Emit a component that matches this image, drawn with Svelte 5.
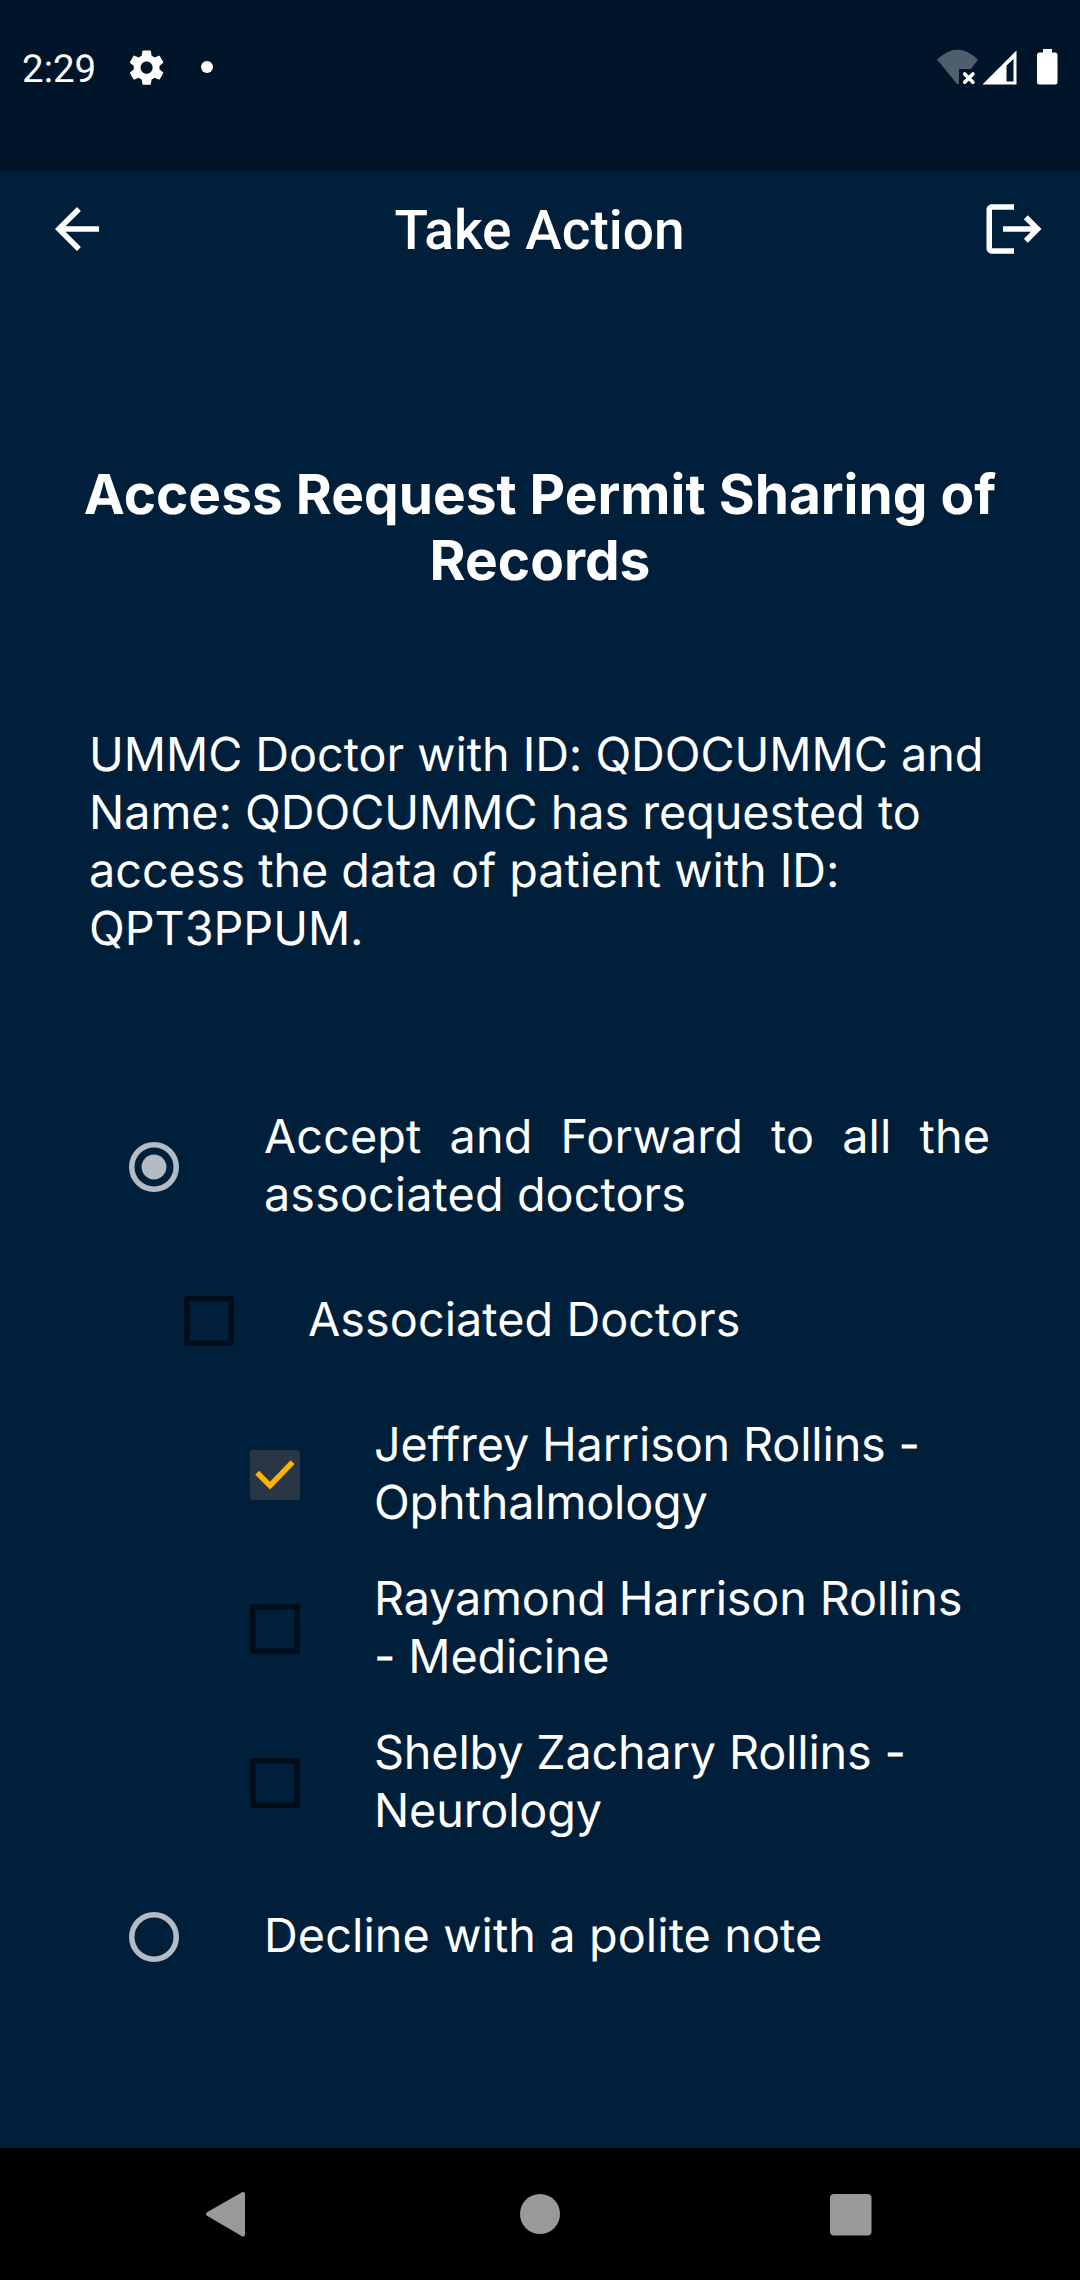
<script>
  let choice = $state('accept');
  let all = $state(false);
  let doctors = $state([
    { label: 'Jeffrey Harrison Rollins - Ophthalmology', checked: true },
    { label: 'Rayamond Harrison Rollins - Medicine', checked: false },
    { label: 'Shelby Zachary Rollins - Neurology', checked: false }
  ]);
</script>

{#snippet radio(on)}
  <svg class="control" viewBox="0 0 50 50">
    <circle cx="25" cy="25" r="22.25" fill="none" stroke="#b3bcc5" stroke-width="5.5" />
    {#if on}<circle cx="25" cy="25" r="12.4" fill="#b3bcc5" />{/if}
  </svg>
{/snippet}

{#snippet checkbox(on)}
  <svg class="control" viewBox="0 0 50 50">
    {#if on}
      <rect x="0" y="0" width="50" height="50" rx="3" fill="#293643" />
      <path d="M7.2 22.8L20 35.6L42.6 12.2" fill="none" stroke="#ffb300" stroke-width="5.5" />
    {:else}
      <rect x="2.75" y="2.75" width="44.5" height="44.5" rx="1" fill="none" stroke="#010e1a" stroke-width="5.5" />
    {/if}
  </svg>
{/snippet}

<div class="screen">
  <div class="status">
    <span class="time">2:29</span>
    <svg class="gear" viewBox="0 0 24 24">
      <path fill="#fff" d="M19.43 12.98c.04-.32.07-.64.07-.98s-.03-.66-.07-.98l2.11-1.65c.19-.15.24-.42.12-.64l-2-3.46c-.12-.22-.39-.3-.61-.22l-2.49 1c-.52-.4-1.08-.73-1.69-.98l-.38-2.65C14.46 2.18 14.25 2 14 2h-4c-.25 0-.46.18-.49.42l-.38 2.65c-.61.25-1.17.59-1.69.98l-2.49-1c-.23-.09-.49 0-.61.22l-2 3.46c-.13.22-.07.49.12.64l2.11 1.65c-.04.32-.07.65-.07.98s.03.66.07.98l-2.11 1.65c-.19.15-.24.42-.12.64l2 3.46c.12.22.39.3.61.22l2.49-1c.52.4 1.08.73 1.69.98l.38 2.65c.03.24.24.42.49.42h4c.25 0 .46-.18.49-.42l.38-2.65c.61-.25 1.17-.59 1.69-.98l2.49 1c.23.09.49 0 .61-.22l2-3.46c.12-.22.07-.49-.12-.64l-2.11-1.65zM12 15.5c-1.93 0-3.5-1.57-3.5-3.5s1.57-3.5 3.5-3.5 3.5 1.57 3.5 3.5-1.57 3.5-3.5 3.5z" />
    </svg>
    <span class="dot"></span>
    <svg class="signals" width="126" height="40" viewBox="0 0 126 40">
      <path d="M2 13Q22.500-6.500 43 13L36 22.500H24V37.500H22Z" transform="translate(-1 -.5)" fill="#505d6c" />
      <path d="M28.700 27L36.900 35.200M36.900 27L28.700 35.200" fill="none" stroke="#fff" stroke-width="3.600" stroke-linecap="round" />
      <path d="M80.500 3.500V37.500H46.500ZM77.500 12L70.500 18.500V34.500H77.500Z" fill="#fff" fill-rule="evenodd" />
      <path d="M107 2H116V5.500H119Q121.500 5.500 121.500 8V35Q121.500 37.500 119 37.500H103.500Q101 37.500 101 35V8Q101 5.500 103.500 5.500H107Z" fill="#fff" />
    </svg>
  </div>

  <header class="appbar">
    <svg class="icon" viewBox="0 0 24 24">
      <path fill="#fff" d="M20 11H7.830l5.590-5.590L12 4l-8 8 8 8 1.410-1.410L7.830 13H20v-2z" />
    </svg>
    <h1>Take Action</h1>
    <svg class="icon" viewBox="0 0 24 24">
      <path fill="#fff" d="M17 7l-1.410 1.410L18.170 11H8v2h10.170l-2.580 2.580L17 17l5-5zM4 5h8V3H4c-1.100 0-2 .9-2 2v14c0 1.100.9 2 2 2h8v-2H4V5z" />
    </svg>
  </header>

  <main>
    <h2>Access Request Permit Sharing of Records</h2>
    <p class="message">UMMC Doctor with ID: QDOCUMMC and Name: QDOCUMMC has requested to access the data of patient with ID: QPT3PPUM.</p>

    <div class="options">
      <div class="row level0" role="radio" aria-checked={choice === 'accept'} tabindex="-1">
        {@render radio(choice === 'accept')}
        <span class="label justified">Accept and Forward to all the associated doctors</span>
      </div>
      <div class="row level1" role="checkbox" aria-checked={all} tabindex="-1">
        {@render checkbox(all)}
        <span class="label">Associated Doctors</span>
      </div>
      {#each doctors as doctor}
        <div class="row level2" role="checkbox" aria-checked={doctor.checked} tabindex="-1">
          {@render checkbox(doctor.checked)}
          <span class="label">{doctor.label}</span>
        </div>
      {/each}
      <div class="row level0" role="radio" aria-checked={choice === 'decline'} tabindex="-1">
        {@render radio(choice === 'decline')}
        <span class="label">Decline with a polite note</span>
      </div>
    </div>
  </main>

  <nav>
    <svg width="1080" height="132" viewBox="0 0 1080 132">
      <path d="M208 66L243 46V86.500Z" fill="#999" stroke="#999" stroke-width="4" stroke-linejoin="round" />
      <circle cx="540" cy="66" r="20" fill="#999" />
      <rect x="830" y="46" width="41.500" height="41.500" rx="4" fill="#999" />
    </svg>
  </nav>
</div>

<style>
  :global(body) {
    margin: 0;
    background: #001f3a;
  }
  .screen {
    width: 1080px;
    height: 2280px;
    display: flex;
    flex-direction: column;
    background: #001f3a;
    color: #fff;
    font-family: Inter, sans-serif;
    text-rendering: geometricPrecision;
    overflow: hidden;
  }
  .status {
    height: 171px;
    flex: none;
    box-sizing: border-box;
    padding: 45px 18px 0 22px;
    display: flex;
    align-items: flex-start;
    background: #00142a;
  }
  .time {
    width: 104px;
    margin-top: 1px;
    font: 400 38.500px/48px Roboto, sans-serif;
  }
  .gear {
    width: 41.250px;
    height: 41.250px;
    margin-top: 2px;
  }
  .dot {
    width: 12px;
    height: 12px;
    margin: 16px 0 0 34px;
    border-radius: 50%;
    background: #fff;
  }
  .signals {
    margin: 2px 0 0 auto;
  }
  .appbar {
    height: 116px;
    flex: none;
    box-sizing: border-box;
    padding: 0 33px 0 44px;
    display: grid;
    grid-template-columns: 66px 1fr 66px;
    align-items: center;
  }
  .icon {
    width: 66px;
    height: 66px;
  }
  h1 {
    margin: 4px 12px 0 0;
    text-align: center;
    font: 500 55px/64px Roboto, sans-serif;
  }
  main {
    flex: 1;
  }
  h2 {
    margin: 175px 80px 0;
    text-align: center;
    font-size: 55px;
    line-height: 66px;
    font-weight: 700;
  }
  .message {
    margin: 132px 80px 0 89px;
    font-size: 46.750px;
    line-height: 58px;
    letter-spacing: -0.040px;
  }
  .options {
    margin-top: 132px;
  }
  .row {
    height: 154px;
    display: flex;
    align-items: center;
    padding-right: 90px;
  }
  .level0 {
    padding-left: 129px;
    gap: 85px;
    letter-spacing: 0.100px;
  }
  .level1 {
    padding-left: 184px;
    gap: 74px;
    letter-spacing: 0.060px;
  }
  .level2 {
    padding-left: 250px;
    gap: 74px;
    letter-spacing: -0.160px;
  }
  .control {
    width: 50px;
    height: 50px;
    flex: none;
  }
  .label {
    flex: 1;
    margin-top: -3px;
    font-size: 46.750px;
    line-height: 58px;
  }
  .justified {
    text-align: justify;
  }
  nav {
    height: 132px;
    flex: none;
    background: #000;
  }
  nav svg {
    display: block;
  }
</style>
